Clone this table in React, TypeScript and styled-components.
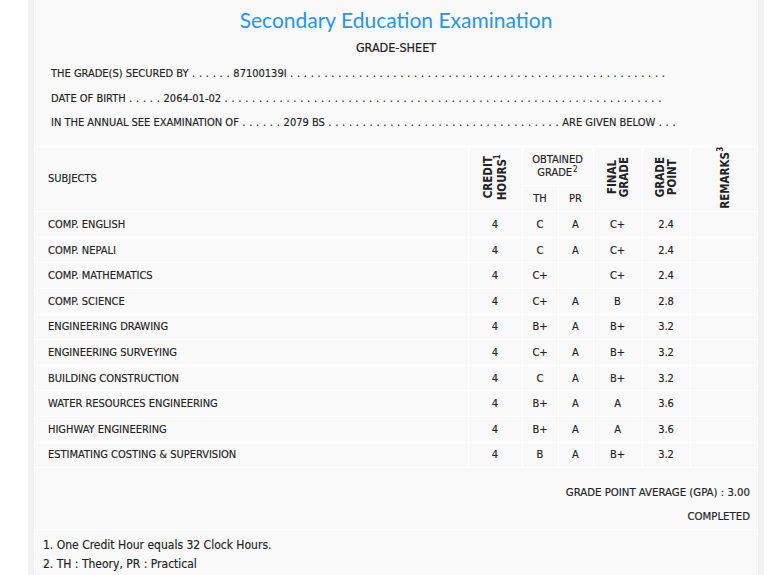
import React from "react";
import styled, { createGlobalStyle } from "styled-components";

const Global = createGlobalStyle`
  html, body { margin: 0; padding: 0; background: #ffffff; }
  body {
    font-family: "DejaVu Sans", "Open Sans", sans-serif;
    font-stretch: condensed;
    font-size: 11px;
    color: #222222;
  }
`;

const Outer = styled.div`
  margin-left: 28px;
  width: 736px;
  box-sizing: border-box;
  padding: 0 6px;
  background: #f2f2f2;
`;

const Panel = styled.div`
  background: #f9f9f9;
  border-left: 1px solid #ffffff;
  border-right: 1px solid #ffffff;
`;

const Header = styled.header`
  padding: 7px 0 10px 16px;
  border-bottom: 1px solid #ffffff;
`;

const Title = styled.h1`
  margin: 0;
  padding-right: 16px;
  text-align: center;
  font-family: "Lato", "Open Sans", sans-serif;
  font-stretch: normal;
  font-weight: 400;
  font-size: 21px;
  line-height: 26px;
  color: #2196f3;
`;

const SubTitle = styled.h2`
  margin: 7px 0 0;
  padding-right: 16px;
  text-align: center;
  font-size: 12.5px;
  line-height: 16px;
  font-weight: 400;
  color: #1e1e1e;
  -webkit-text-stroke: 0.2px #1e1e1e;
`;

const InfoList = styled.div`
  margin-top: 6px;
  display: flex;
  flex-direction: column;
`;

const InfoLine = styled.div`
  line-height: 24.5px;
  white-space: nowrap;
  -webkit-text-stroke: 0.15px #222222;
`;

const DotRun = styled.span`
  letter-spacing: 0.3px;
`;

const Dots = ({ n }: { n: number }) => (
  <DotRun>{" " + Array(n).fill(".").join(" ") + " "}</DotRun>
);

const Table = styled.table`
  width: 100%;
  table-layout: fixed;
  border-collapse: collapse;
  border-style: hidden;
  -webkit-text-stroke: 0.15px #222222;
`;

const Th = styled.th<{ $align?: string }>`
  border: 1px solid #ffffff;
  font-weight: 400;
  text-align: ${(p) => p.$align || "center"};
  padding: 0;
  vertical-align: middle;
  ${(p) => (p.$align === "left" ? "padding-left: 13px;" : "")}
`;

const GroupTh = styled(Th)`
  height: 38px;
  line-height: 13px;
`;

const SubTh = styled(Th)`
  height: 25px;
`;

const Vertical = styled.div`
  display: inline-block;
  writing-mode: vertical-rl;
  transform: rotate(180deg);
  font-weight: 700;
  font-size: 11.5px;
  line-height: 12px;
  text-align: center;
  -webkit-text-stroke: 0;
`;

const Sup = styled.span`
  font-size: 8px;
  line-height: 1;
  vertical-align: 4px;
  margin-left: 1px;
`;

const Td = styled.td<{ $align?: string }>`
  border: 1px solid #ffffff;
  height: 24.6px;
  padding: 0;
  text-align: ${(p) => p.$align || "center"};
  ${(p) => (p.$align === "left" ? "padding-left: 13px;" : "")}
  white-space: nowrap;
`;

const Summary = styled.div`
  padding: 13px 7px 0 0;
  text-align: right;
  font-size: 11.3px;
  line-height: 24px;
  border-top: 1px solid #ffffff;
  border-bottom: 1px solid #ffffff;
  -webkit-text-stroke: 0.15px #222222;
`;

const Notes = styled.ol`
  list-style: none;
  margin: 0;
  padding: 6px 0 20px 8px;
  font-size: 12px;
  line-height: 19px;
  -webkit-text-stroke: 0.15px #222222;
`;

type Row = [string, string, string, string, string, string];

const rows: Row[] = [
  ["COMP. ENGLISH", "4", "C", "A", "C+", "2.4"],
  ["COMP. NEPALI", "4", "C", "A", "C+", "2.4"],
  ["COMP. MATHEMATICS", "4", "C+", "", "C+", "2.4"],
  ["COMP. SCIENCE", "4", "C+", "A", "B", "2.8"],
  ["ENGINEERING DRAWING", "4", "B+", "A", "B+", "3.2"],
  ["ENGINEERING SURVEYING", "4", "C+", "A", "B+", "3.2"],
  ["BUILDING CONSTRUCTION", "4", "C", "A", "B+", "3.2"],
  ["WATER RESOURCES ENGINEERING", "4", "B+", "A", "A", "3.6"],
  ["HIGHWAY ENGINEERING", "4", "B+", "A", "A", "3.6"],
  ["ESTIMATING COSTING & SUPERVISION", "4", "B", "A", "B+", "3.2"],
];

export default function App() {
  return (
    <>
      <Global />
      <Outer>
        <Panel>
          <Header>
            <Title>Secondary Education Examination</Title>
            <SubTitle>GRADE-SHEET</SubTitle>
            <InfoList>
              <InfoLine>
                THE GRADE(S) SECURED BY<Dots n={6} />87100139I<Dots n={55} />
              </InfoLine>
              <InfoLine>
                DATE OF BIRTH<Dots n={5} />2064-01-02<Dots n={64} />
              </InfoLine>
              <InfoLine>
                IN THE ANNUAL SEE EXAMINATION OF<Dots n={6} />2079 BS
                <Dots n={34} />ARE GIVEN BELOW<Dots n={3} />
              </InfoLine>
            </InfoList>
          </Header>
          <Table>
            <colgroup>
              <col style={{ width: 433 }} />
              <col style={{ width: 54 }} />
              <col style={{ width: 36 }} />
              <col style={{ width: 35 }} />
              <col style={{ width: 49 }} />
              <col style={{ width: 48 }} />
              <col style={{ width: 67 }} />
            </colgroup>
            <thead>
              <tr>
                <GroupTh rowSpan={2} $align="left">SUBJECTS</GroupTh>
                <GroupTh rowSpan={2}>
                  <Vertical>
                    CREDIT
                    <br />
                    HOURS<Sup>1</Sup>
                  </Vertical>
                </GroupTh>
                <GroupTh colSpan={2}>
                  OBTAINED
                  <br />
                  GRADE<Sup>2</Sup>
                </GroupTh>
                <GroupTh rowSpan={2}>
                  <Vertical>
                    FINAL
                    <br />
                    GRADE
                  </Vertical>
                </GroupTh>
                <GroupTh rowSpan={2}>
                  <Vertical>
                    GRADE
                    <br />
                    POINT
                  </Vertical>
                </GroupTh>
                <GroupTh rowSpan={2}>
                  <Vertical>
                    REMARKS<Sup>3</Sup>
                  </Vertical>
                </GroupTh>
              </tr>
              <tr>
                <SubTh>TH</SubTh>
                <SubTh>PR</SubTh>
              </tr>
            </thead>
            <tbody>
              {rows.map((r) => (
                <tr key={r[0]}>
                  <Td $align="left">{r[0]}</Td>
                  <Td>{r[1]}</Td>
                  <Td>{r[2]}</Td>
                  <Td>{r[3]}</Td>
                  <Td>{r[4]}</Td>
                  <Td>{r[5]}</Td>
                  <Td />
                </tr>
              ))}
            </tbody>
          </Table>
          <Summary>
            <div>GRADE POINT AVERAGE (GPA) : 3.00</div>
            <div>COMPLETED</div>
          </Summary>
          <Notes>
            <li>1. One Credit Hour equals 32 Clock Hours.</li>
            <li>2. TH : Theory, PR : Practical</li>
          </Notes>
        </Panel>
      </Outer>
    </>
  );
}
